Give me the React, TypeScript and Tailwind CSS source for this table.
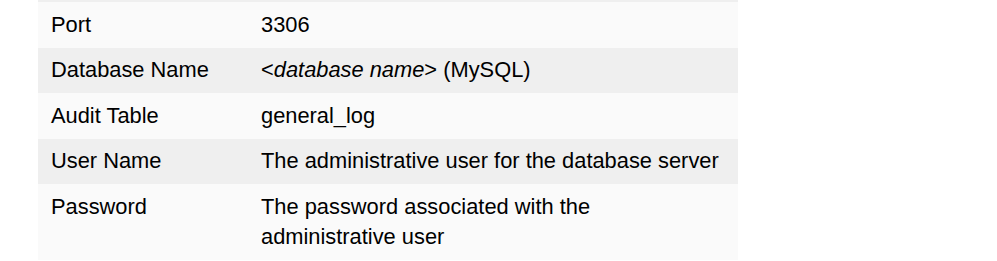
import React from "react";

const rows = [
  { label: "Port", value: <>3306</> },
  {
    label: "Database Name",
    value: (
      <>
        &lt;<i>database name</i>&gt; (MySQL)
      </>
    ),
  },
  { label: "Audit Table", value: <>general_log</> },
  { label: "User Name", value: <>The administrative user for the database server</> },
  { label: "Password", value: <>The password associated with the administrative user</> },
];

function App() {
  return (
    <div
      className="w-[997px] h-[261px] bg-white text-black overflow-hidden"
      style={{ fontFamily: '"Liberation Sans", Arial, sans-serif' }}
    >
      <div className="ml-[38px] w-[700px]">
        <div className="h-[2px] bg-[#efefef]" />
        {rows.map((row, i) => (
          <div
            key={row.label}
            className={`flex text-[21.85px] leading-[30px] ${i % 2 === 0 ? "bg-[#fafafa]" : "bg-[#efefef]"}`}
          >
            <div className="w-[210px] shrink-0 px-[13px] py-[7.75px]">{row.label}</div>
            <div className="flex-1 px-[13px] py-[7.75px]">{row.value}</div>
          </div>
        ))}
      </div>
    </div>
  );
}

export default App;
